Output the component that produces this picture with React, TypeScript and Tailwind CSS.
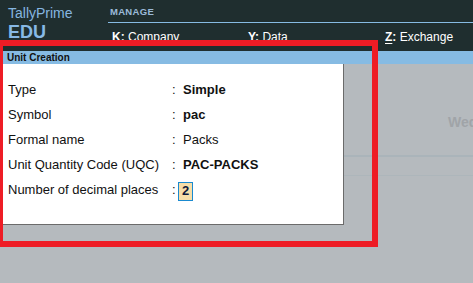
export default function App() {
  const rows = [
    { label: "Type", value: "Simple", bold: true },
    { label: "Symbol", value: "pac", bold: true },
    { label: "Formal name", value: "Packs", bold: false },
    { label: "Unit Quantity Code (UQC)", value: "PAC-PACKS", bold: true },
  ];

  return (
    <div
      className="relative h-[283px] w-[473px] overflow-hidden bg-[#b5babe]"
      style={{ fontFamily: '"Liberation Sans", Arial, sans-serif' }}
    >
      <header className="flex h-[51px] bg-[#1f2e2f]">
        <div className="w-[108px] shrink-0 pl-2 pt-[5px]">
          <p className="text-[14px] leading-[16px] text-[#86b6e0]">TallyPrime</p>
          <p className="mt-[1px] text-[18px] font-bold leading-[21px] text-[#87b9e6]">EDU</p>
        </div>
        <div className="flex flex-1 flex-col">
          <p className="h-[22px] pl-[2px] pt-[6px] text-[9.5px] font-bold leading-[12px] tracking-[0.3px] text-[#9bbad8]">
            MANAGE
          </p>
          <div className="h-px bg-[#86bbe3]" />
          <div className="flex pl-[4px] pt-[7px] text-[12px] leading-[14px] text-white">
            <span className="w-[136px]">
              <b>K:</b> Company
            </span>
            <span className="w-[137px]">
              <b>Y:</b> Data
            </span>
            <span>
              <b className="underline underline-offset-2">Z</b>
              <b>:</b> Exchange
            </span>
          </div>
        </div>
      </header>

      <div className="h-[13px] bg-[#86bbe3] pl-[7px] text-[10px] font-bold leading-[13px] text-[#111]">
        Unit Creation
      </div>

      <div className="flex">
        <section className="h-[161px] w-[344px] shrink-0 border-b border-r border-[#6b6b6b] bg-white pt-[13px] text-[13px] text-[#111]">
          {rows.map((row) => (
            <div key={row.label} className="flex h-[25px] items-center">
              <span className="w-[172px] pl-2">{row.label}</span>
              <span className="w-[11px]">:</span>
              <span className={row.bold ? "font-bold" : ""}>{row.value}</span>
            </div>
          ))}
          <div className="flex h-[25px] items-center">
            <span className="w-[172px] pl-2">Number of decimal places</span>
            <span className="w-[6px]">:</span>
            <span className="mt-[3px] flex h-[19px] w-[15px] items-center justify-center border border-[#1a8ad0] bg-[#f7dea8] font-bold text-[#101a3a]">
              2
            </span>
          </div>
        </section>

        <div className="flex min-w-0 flex-1 flex-col">
          <p className="h-[91px] whitespace-nowrap pl-[104px] pt-[50px] text-[14px] font-bold leading-[16px] text-[#a0a4a8]">
            Wed
          </p>
          <div className="h-[2px] bg-[#aab4ba]" />
          <div className="h-[18px]" />
          <div className="h-px bg-[#adb6bb]" />
        </div>
      </div>

      <div className="pointer-events-none absolute left-[-3px] top-[40px] h-[207px] w-[381px] border-[6px] border-[#ee1c25]" />
    </div>
  );
}
